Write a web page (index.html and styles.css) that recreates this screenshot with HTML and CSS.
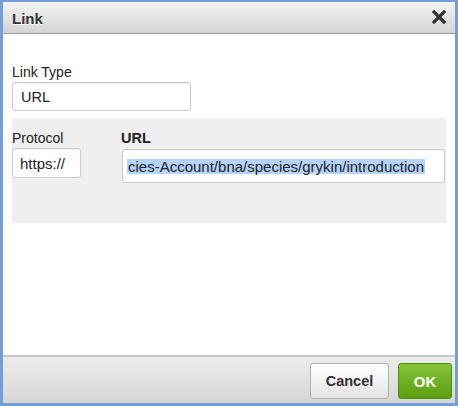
FILE: index.html
```html
<!DOCTYPE html>
<html>
<head>
<meta charset="utf-8">
<link rel="stylesheet" href="styles.css">
</head>
<body>
<div class="dialog">
  <div class="titlebar">
    <span class="title">Link</span>
    <svg class="close" width="14" height="14" viewBox="0 0 14 14"><path d="M2 2 L12 12 M12 2 L2 12" stroke="#333" stroke-width="3.2" stroke-linecap="square" fill="none"/></svg>
  </div>
  <div class="content">
    <div class="label">Link Type</div>
    <div class="field field-type">URL</div>
    <div class="panel">
      <div class="col col-proto">
        <div class="label">Protocol</div>
        <div class="field field-proto">https://</div>
      </div>
      <div class="col col-url">
        <div class="label bold">URL</div>
        <div class="field field-url"><span class="sel">cies-Account/bna/species/grykin/introduction</span></div>
      </div>
    </div>
  </div>
  <div class="footer">
    <div class="btn btn-cancel">Cancel</div>
    <div class="btn btn-ok">OK</div>
  </div>
</div>
</body>
</html>
```

FILE: styles.css
```css
html, body {
  margin: 0;
  padding: 0;
  background: #ffffff;
}
.dialog {
  width: 458px;
  height: 406px;
  box-sizing: border-box;
  border: 3px solid #729fd6;
  border-top-width: 2px;
  display: flex;
  flex-direction: column;
  font-family: "Liberation Sans", Arial, sans-serif;
  color: #222;
  background: #fff;
}
.titlebar {
  height: 31px;
  flex: none;
  border-bottom: 1px solid #9c9c9c;
  background: linear-gradient(#f3f3f3, #d4d4d4);
  display: flex;
  align-items: center;
  justify-content: space-between;
  padding: 0 9px 0 9px;
}
.title {
  font-weight: bold;
  font-size: 15px;
  line-height: 31px;
  color: #333;
  padding-top: 2px;
  text-shadow: 0 1px 0 #fff;
}
.close {
  display: block;
  margin-top: -2px;
}
.content {
  flex: 1;
  padding: 30px 9px 0 9px;
  background: #fff;
}
.label {
  font-size: 14px;
  line-height: 16px;
  color: #222;
}
.label.bold {
  font-weight: bold;
  font-size: 14.5px;
}
.field {
  box-sizing: border-box;
  border: 1px solid #cacaca;
  border-radius: 3px;
  background: #fff;
  box-shadow: inset 0 1px 1px rgba(0,0,0,0.06);
  font-size: 15px;
  color: #222;
  display: flex;
  align-items: center;
  white-space: nowrap;
  overflow: hidden;
}
.field-type {
  width: 179px;
  height: 29px;
  margin-top: 2px;
  padding-left: 8px;
  font-size: 14.5px;
}
.panel {
  margin-top: 7px;
  height: 105px;
  background: #efefef;
  display: flex;
  padding: 12px 1px 0 0;
  box-sizing: border-box;
  gap: 40px;
}
.col-proto {
  width: 69px;
  flex: none;
}
.col-url {
  flex: 1;
}
.field-proto {
  width: 69px;
  height: 30px;
  margin-top: 2px;
  padding-left: 7px;
}
.field-url {
  height: 34px;
  margin-top: 3px;
  margin-left: 1px;
  padding-left: 4px;
}
.sel {
  background: #b4d4fb;
  line-height: 15px;
  padding: 0 1px;
}
.footer {
  flex: none;
  height: 48px;
  border-top: 2px solid #c8c8c8;
  background: linear-gradient(#ececec, #d6d6d6);
  display: flex;
  justify-content: flex-end;
  align-items: flex-start;
  padding: 6px 3px 0 0;
  box-sizing: border-box;
  gap: 9px;
}
.btn {
  box-sizing: border-box;
  height: 36px;
  border-radius: 3px;
  font-weight: bold;
  font-size: 15px;
  display: flex;
  align-items: center;
  justify-content: center;
}
.btn-cancel {
  width: 79px;
  border: 1px solid #afafaf;
  background: linear-gradient(#ffffff, #e4e4e4);
  color: #333;
  font-size: 14.5px;
}
.btn-ok {
  width: 54px;
  border: 1px solid #4e8e0c;
  background: linear-gradient(#86c33a, #5b9e10);
  color: #fff;
}
```
